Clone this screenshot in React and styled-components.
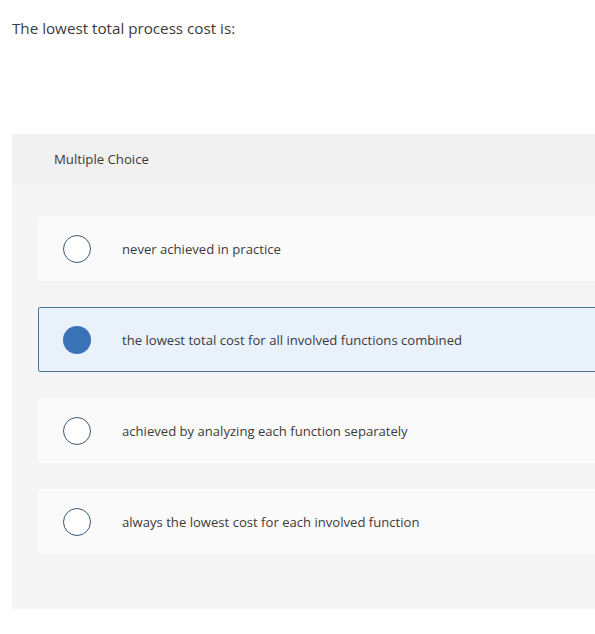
import React, { useState } from 'react';
import styled, { createGlobalStyle } from 'styled-components';

const GlobalStyle = createGlobalStyle`
	html, body {
		margin: 0;
		padding: 0;
		background: #fff;
		overflow: hidden;
	}
	body {
		font-family: "Open Sans", Lato, "Liberation Sans", sans-serif;
		color: #333;
	}
`;

const choices = [
	'never achieved in practice',
	'the lowest total cost for all involved functions combined',
	'achieved by analyzing each function separately',
	'always the lowest cost for each involved function',
];

const App = () => {
	const [selected, setSelected] = useState(1);

	return (
		<Page>
			<GlobalStyle />
			<Question>The lowest total process cost is:</Question>
			<Panel>
				<PanelHeader>Multiple Choice</PanelHeader>
				<ChoiceList>
					{choices.map((text, index) => (
						<Choice
							key={index}
							$active={selected === index}
							onClick={() => setSelected(index)}
						>
							<Radio $active={selected === index} />
							<ChoiceText>{text}</ChoiceText>
						</Choice>
					))}
				</ChoiceList>
			</Panel>
		</Page>
	);
};

export default App;

const Page = styled.div`
	width: 595px;
	height: 634px;
	padding-top: 18px;
	box-sizing: border-box;
	overflow: hidden;
`;

const Question = styled.p`
	margin: 0 0 0 12px;
	font-size: 15.2px;
	line-height: 20px;
	color: #3a3a3a;
`;

const Panel = styled.div`
	margin: 96px -30px 0 12px;
	background-color: #f5f5f5;
`;

const PanelHeader = styled.div`
	height: 50px;
	display: flex;
	align-items: center;
	padding-left: 42px;
	background-color: #f0f0f0;
	font-size: 13.2px;
	color: #3a3a3a;
`;

const ChoiceList = styled.div`
	display: flex;
	flex-direction: column;
	gap: 26px;
	padding: 32px 0 55px 26px;
`;

const Choice = styled.div`
	height: 65px;
	box-sizing: border-box;
	display: flex;
	align-items: center;
	padding-left: 24px;
	border: 1px solid ${(p) => (p.$active ? '#4d7393' : 'transparent')};
	border-radius: 2px;
	background-color: ${(p) => (p.$active ? '#e9f2fb' : '#fafafa')};
	cursor: pointer;
`;

const Radio = styled.span`
	width: 28px;
	height: 28px;
	box-sizing: border-box;
	border-radius: 50%;
	flex-shrink: 0;
	border: ${(p) => (p.$active ? 'none' : '1.5px solid #3b5875')};
	background-color: ${(p) => (p.$active ? '#3a72b6' : '#fff')};
`;

const ChoiceText = styled.span`
	margin-left: 31px;
	font-size: 13.1px;
	color: #3a3a3a;
`;
